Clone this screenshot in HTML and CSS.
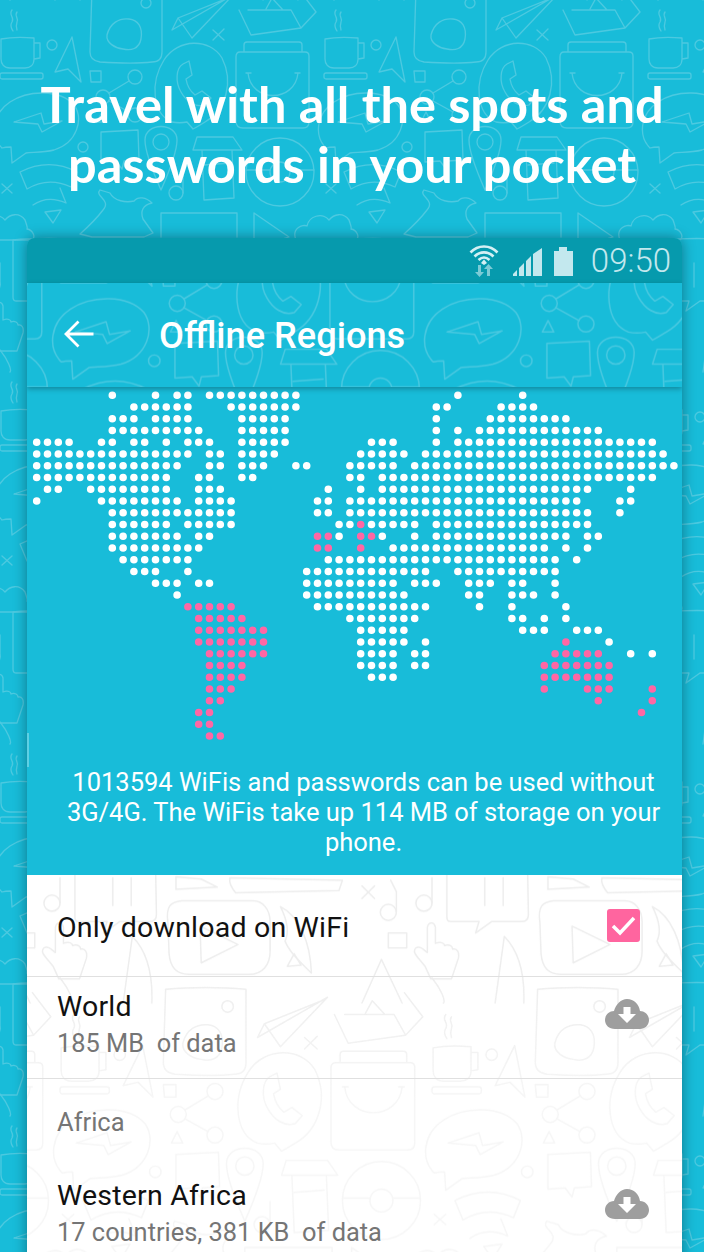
FILE: index.html
```html
<!DOCTYPE html>
<html lang="en">
<head>
<meta charset="utf-8">
<title>Offline Regions</title>
<link rel="stylesheet" href="styles.css">
</head>
<body>
<svg class="defs" width="0" height="0" aria-hidden="true">
  <defs>
    <g id="d">
      <path d="M12 10c-4 5 3 7 0 12c-2 3-1 6 1 9M17 12c-3 4 2 6 0 10c-1 3-1 5 0 8"/>
      <path d="M1 39c10-2 22-2 33-1v21c0 6-4 9-9 9H10c-6 0-9-4-9-9zM34 43h6v15l-6 1"/>
      <rect x="0" y="73" width="43" height="6" rx="2"/>
      <circle cx="52" cy="45" r="5"/>
      <path d="M72 37L55 72l13-3l13 13z"/>
      <path d="M90 71h11v11H91z"/>
      <circle cx="135" cy="77" r="7"/><circle cx="103" cy="97" r="7"/><circle cx="135" cy="115" r="7"/>
      <path d="M129 81l-20 12M109 101l20 11M102 112l5 10h-10z"/>
      <path d="M92 -12c20-2 50-2 70 0v64c0 7-3 10-10 10c-18 2-36 1-52 0c-7-1-10-4-10-10z"/>
      <path d="M107 35c3-12 12-17 22-16c9 1 14 8 12 20c-2 10-10 12-18 10c-8-1-17-6-16-14z"/>
      <circle cx="146" cy="3" r="5"/>
      <path d="M172 30L233-5L192 38L178 18zM178 18L228-2"/>
      <path d="M213 30l11 10M224 29l-11 11"/>
      <path d="M239 10L251 35L301 28L316 12L300-9M248 10h43l10 18M266 9l6-11l11 12"/>
      <path d="M244 52v-7c0-2 1-3 3-3h52c2 0 3 1 3 3v7M240 52h65c3 0 4 2 4 4v66c0 4-2 6-6 6h-60c-5 0-7-3-7-7V57c0-3 1-5 4-5z"/>
      <path d="M248 73c3 30 47 30 50 0M246 73h5M295 73h5"/>
      <path d="M172 122c-20-8-22-40-8-62c14-22 46-22 58-2c12 24 4 52-17 64c-5 3-8 5-12 7l-6-7c-5 1-10 1-15 0z"/>
      <path d="M183 64c-7 4-8 18-2 28c5 9 14 16 24 13l6-7l-9-7l-7 4c-5-4-8-10-9-16l6-4l-3-14z"/>
      <path d="M2 148c-12-12-10-34 8-46c18-12 50-13 64 3c10 14 3 38-20 45c-12 3-22 2-28 3L12 163l-1-16c-3 0-6 0-9 1z"/>
      <path d="M14 122L41 113L44 124L62 121L42 132L38 124z"/>
      <circle cx="83" cy="147" r="5"/>
      <path d="M101 132l37-2l1 30l-15 1l-2 8l-6-8l-15 1z"/>
      <path d="M161 190c-8-18-16-40-16-50c0-18 32-18 32 0c0 10-8 32-16 50z"/><circle cx="161" cy="142" r="8"/>
      <path d="M193 150l4-13h36l9 13zM202 150l2 50l30-2l-2-48M204 165l26-2"/>
      <circle cx="280" cy="172" r="34"/><circle cx="280" cy="172" r="10"/><path d="M246 170h24M290 170h24"/>
      <path d="M20 172c20-10 38-10 57 0l-6 15c-15-7-29-7-44 2zM33 205c10-7 22-7 33-2l-6-15M45 212l16-2l-8 13z"/>
      <path d="M2 184l10 9M12 184l-10 9"/>
      <circle cx="176" cy="193" r="7"/><path d="M183 193v-20"/>
      <path d="M-28 240c-5-12 7-16 11-14c2-10 15-14 22-6c5-6 14-8 20 0c2 6 3 8 2 9c6 1 9 8 5 11z"/>
      <path d="M100 190c-6 6 12 10 3 20c-6 8-14 16-23 24l12 3h52l9-4l-10-14c-3-8 0-14 9-16c-6-6-14-7-18-2c-8 2-20 0-24-8z"/>
      <path d="M161 237v-24h76v24"/>
      <path d="M254 213l35 24l-35 10z"/>
      <path d="M13 240c20-2 52-2 70 0l1 55c0 4-2 6-6 6H52l-14 10l3-10H16c-2 0-3-2-3-4z"/>
      <path d="M46 263v24M62 263v24"/>
      <path d="M148 263l98 2l-3 9l-90 2c-4-5-6-9-5-13z"/>
      <path d="M101 262l22 2l14 7l-36 2z"/>
      <path d="M94 302c-2-14 2-18 12-19h62c9 0 15 8 15 18v26c0 12-7 20-18 20H112c-10 0-16-6-17-18z"/>
      <path d="M122 305l33 16l-32 16z"/>
      <path d="M192 288c16 8 26 30 27 58c-10-10-19-18-23-28c4-8 2-18-4-30z"/><path d="M198 340l6-11l6 10z"/>
      <path d="M263 270l11 11M274 270l-11 11"/>
      <circle cx="286" cy="293" r="7"/><circle cx="317" cy="285" r="7"/><path d="M293 293v-18l-5-10M324 285v-22"/>
      <path d="M286 311h16v13h-16z"/>
      <path d="M318 340c-6-8-12-12-8-16c4-3 8 3 10 4v-22c1-5 6-5 7 0v14c5-2 8 0 8 2c4-2 7 1 7 3c4-1 6 3 5 8l-6 18h-18z"/>
      <path d="M263 372l17-38l18 38M55 372l8-58c12 12 18 30 17 58M0 350c8 10 12 20 10 22"/>
    </g>
    <pattern id="p-bg" width="324" height="372" patternUnits="userSpaceOnUse">
      <use href="#d"/><use href="#d" x="324"/><use href="#d" y="372"/><use href="#d" x="-324"/><use href="#d" y="-372"/>
    </pattern>
    <pattern id="p-bar" width="324" height="372" patternUnits="userSpaceOnUse" patternTransform="translate(32 -91) scale(1.148)">
      <use href="#d"/><use href="#d" x="324"/><use href="#d" y="372"/><use href="#d" x="-324"/><use href="#d" y="-372"/>
    </pattern>
    <pattern id="p-list" width="324" height="372" patternUnits="userSpaceOnUse" patternTransform="translate(33 -299) scale(1.148)">
      <use href="#d"/><use href="#d" x="324"/><use href="#d" y="372"/><use href="#d" x="-324"/><use href="#d" y="-372"/>
    </pattern>
  </defs>
</svg>

<main class="page">
  <svg class="doodles" aria-hidden="true"><rect width="100%" height="100%" fill="url(#p-bg)"/></svg>
  <h1 class="headline">Travel with all the spots and<br>passwords in your pocket</h1>

  <section class="phone">
    <div class="statusbar">
      <svg class="ic-wifi" viewBox="0 0 30 32" width="30" height="32" aria-hidden="true">
        <path class="st" d="M1.5 7.5C9-.5 21-.5 28.500 7.500M5.500 11.500C11 6 19 6 24.500 11.500M9.500 15C13 11.800 17 11.800 20.500 15"/>
        <path class="fi" d="M15 14.500l3 3.500-3 2-3-2z"/>
        <path class="dim" d="M10.500 32l-4.500-5h3v-7h3v7h3zM19.500 19l4.500 5h-3v7h-3v-7h-3z"/>
      </svg>
      <svg class="ic-signal" viewBox="0 0 29 28" width="29" height="28" aria-hidden="true">
        <path class="fi" d="M0 28v-2l4-4v6zM6 28v-8l5-5v13zM13 28V13l5-5v20zM20 28V6l9-6v28z"/>
      </svg>
      <svg class="ic-battery" viewBox="0 0 19 29" width="19" height="29" aria-hidden="true">
        <path class="fi" d="M5 0h8v4h6v25H0V4h5z"/>
      </svg>
      <span class="clock">09:50</span>
    </div>

    <header class="toolbar">
      <svg class="doodles" aria-hidden="true"><rect width="100%" height="100%" fill="url(#p-bar)"/></svg>
      <svg class="ic-back" viewBox="0 0 30 28" width="30" height="28" aria-hidden="true">
        <path d="M29.500 14H2.500M14.500 1.500L2 14l12.500 12.500"/>
      </svg>
      <h2 class="toolbar-title">Offline Regions</h2>
    </header>

    <section class="map-panel">
      <svg class="map" width="655" height="365" role="img" aria-label="World map of dots">
        <g transform="translate(9.7 8.300) scale(10.8 11.75)">
          <path class="dots dots-white" d="M7 0h.01M11 0h.01M13 0h1.010M16 0h8.010M39 0h.01M45 0h.01
M9 1h5.010M18 1h6.010M37 1h1.010M43 1h3.010
M7 2h2.010M11 2h3.010M19 2h4.010M37 2h.01M42 2h7.010
M7 3h8.010M19 3h4.010M37 3h.01M39 3h.01M41 3h11.010
M0 4h3.010M6 4h1.010M9 4h1.010M12 4h.01M14 4h2.010M19 4h4.010M31 4h2.010M37 4h.01M39 4h18.010
M0 5h14.010M16 5h1.010M19 5h3.010M30 5h4.010M36 5h22.010
M0 6h13.010M16 6h1.010M19 6h2.010M24 6h1.010M29 6h4.010M35 6h24.010
M0 7h12.010M15 7h1.010M19 7h1.010M29 7h1.010M32 7h25.010
M1 8h1.010M5 8h7.010M15 8h2.010M27 8h.01M30 8h.01M32 8h19.010M55 8h.01
M0 9h.01M6 9h7.010M15 9h3.010M26 9h1.010M29 9h21.010M54 9h1.010
M7 10h11.010M26 10h1.010M29 10h22.010M54 10h.01
M7 11h5.010M14 11h4.010M28 11h1.010M31 11h4.010M37 11h14.010
M7 12h6.010M15 12h1.010M28 12h.01M32 12h.01M35 12h.01M37 12h12.010M51 12h1.010
M7 13h8.010M33 13h14.010M49 13h.01M51 13h.01
M8 14h6.010M27 14h21.010M50 14h.01
M9 15h2.010M14 15h.01M25 15h11.010M39 15h9.010
M11 16h2.010M15 16h1.010M25 16h8.010M35 16h2.010M40 16h2.010M44 16h1.010M48 16h.01
M13 17h.01M25 17h9.010M40 17h1.010M44 17h2.010M48 17h.01
M26 18h10.010M41 18h.01M44 18h.01M49 18h.01
M29 19h6.010M44 19h1.010M47 19h.01M49 19h.01
M30 20h4.010M45 20h2.010M50 20h2.010
M30 21h4.010M36 21h.01M53 21h.01
M30 22h3.010M35 22h1.010M55 22h.01M57 22h.01
M30 23h3.010M35 23h1.010
M31 24h2.010"/>
          <path class="dots dots-pink" d="M30 11h.01
M26 12h1.010M30 12h1.010
M26 13h1.010M30 13h.01
M14 18h4.010
M15 19h4.010
M15 20h6.010
M15 21h6.010M49 21h.01
M16 22h5.010M48 22h4.010
M16 23h3.010M47 23h6.010
M16 24h3.010M47 24h6.010
M16 25h2.010M47 25h.01M51 25h2.010M57 25h.01
M16 26h1.010M52 26h.01M57 26h.01
M15 27h1.010M56 27h.01
M15 28h1.010
M16 29h1.010"/>
        </g>
      </svg>
      <p class="map-note">1013594 WiFis and passwords can be used without 3G/4G. The WiFis take up 114 MB of storage on your phone.</p>
    </section>

    <section class="list">
      <svg class="doodles doodles-list" aria-hidden="true"><rect width="100%" height="100%" fill="url(#p-list)"/></svg>
      <div class="row row-check">
        <span class="row-title">Only download on WiFi</span>
        <svg class="checkbox" viewBox="0 0 33 33" width="33" height="33" aria-hidden="true">
          <rect width="33" height="33" rx="3"/>
          <path d="M6 17l7 7L27 9"/>
        </svg>
      </div>
      <div class="row row-data">
        <div class="row-text">
          <span class="row-title">World</span>
          <span class="row-sub">185 MB&nbsp; of data</span>
        </div>
        <svg class="cloud" viewBox="0 0 44 30" width="44" height="30" aria-hidden="true">
          <path class="cloud-body" d="M10 30C4 30 0 26 0 21c0-5 4-9 9-9C11 5 16 0 22 0c7 0 12 5 13 12c5 0 9 4 9 9c0 5-4 9-9 9z"/>
          <path class="cloud-arrow" d="M18.500 8h7v7h5.500L22 24l-9-9h5.500z"/>
        </svg>
      </div>
      <div class="section-label">Africa</div>
      <div class="row row-plain">
        <div class="row-text">
          <span class="row-title">Western Africa</span>
          <span class="row-sub">17 countries, 381 KB&nbsp; of data</span>
        </div>
        <svg class="cloud" viewBox="0 0 44 30" width="44" height="30" aria-hidden="true">
          <path class="cloud-body" d="M10 30C4 30 0 26 0 21c0-5 4-9 9-9C11 5 16 0 22 0c7 0 12 5 13 12c5 0 9 4 9 9c0 5-4 9-9 9z"/>
          <path class="cloud-arrow" d="M18.500 8h7v7h5.500L22 24l-9-9h5.500z"/>
        </svg>
      </div>
    </section>
  </section>
</main>
</body>
</html>
```
FILE: styles.css
```css
* { box-sizing: border-box; }
html, body { margin: 0; height: 100%; }
body { overflow: hidden; background: #18bcd9; font-family: Roboto, "Liberation Sans", sans-serif; }
.defs { position: absolute; }

#d { fill: none; stroke-width: 1.300; stroke-linecap: round; stroke-linejoin: round; }
#p-bg use { stroke: #4cc9e0; }
#p-bar use { stroke: #48c8e0; }
#p-list use { stroke: #ededed; }

.page { position: relative; height: 1252px; overflow: hidden; background: #18bcd9; padding-top: 74px; }
.doodles { position: absolute; inset: 0; width: 100%; height: 100%; display: block; }
.doodles-list { -webkit-mask-image: linear-gradient(#000 20%, rgba(0, 0, 0, .5) 45%); mask-image: linear-gradient(#000 20%, rgba(0, 0, 0, .5) 45%); }

.headline {
  position: relative; margin: 0 0 44px; text-align: center; color: #fff;
  font-family: Lato, "Liberation Sans", sans-serif; font-weight: 700; font-size: 50.500px; line-height: 60px;
}

.phone {
  position: relative; margin: 0 22px 0 27px; border-radius: 8px 8px 0 0; background: #18bcd9;
  box-shadow: 0 0 14px rgba(0, 0, 0, .38); height: 1100px; overflow: hidden;
}

.statusbar {
  display: flex; align-items: center; justify-content: flex-end; height: 45px;
  background: #069aad; padding: 0 11px 0 0;
}
.ic-wifi { margin: 0 14px 0 0; }
.ic-wifi .st { fill: none; stroke: #d4f0f4; stroke-width: 2.600; }
.ic-wifi .fi { fill: #d4f0f4; }
.ic-wifi .dim { fill: #7ccbd6; }
.ic-signal { margin-right: 12px; margin-top: 3px; }
.ic-signal .fi, .ic-battery .fi { fill: #c3e8ee; }
.ic-battery { margin-right: 18px; margin-top: 2px; }
.clock { font-weight: 300; font-size: 33px; color: #c3e8ee; line-height: 45px; }

.toolbar {
  position: relative; height: 104px; display: flex; align-items: center; padding: 0 0 0 37px;
  background: #18bcd9; box-shadow: 0 2px 5px rgba(0, 0, 0, .28); z-index: 1;
}
.ic-back { position: relative; fill: none; stroke: #fff; stroke-width: 2.800; margin-bottom: 3px; }
.ic-back path { fill: none; }
.toolbar-title {
  position: relative; margin: 2px 0 0 65px; color: #fff; font-weight: 500; font-size: 36.200px; line-height: 40px;
}

.map-panel { position: relative; height: 488px; background: #18bcd9; }
.map-panel::before { content: ""; position: absolute; left: 0; top: 346px; width: 2px; height: 34px; background: rgba(255, 255, 255, .3); }
.map { display: block; }
.dots { fill: none; stroke-width: 7.600; stroke-linecap: round; stroke-dasharray: 0 10.8; vector-effect: non-scaling-stroke; }
.dots-white { stroke: #fff; }
.dots-pink { stroke: #ff67a4; }
.map-note {
  margin: 15px 0 0; padding: 0 20px 0 38px; text-align: center; color: #fff; font-size: 25.500px; line-height: 30px;
}

.list { position: relative; background: #fff; height: 500px; }
.row {
  position: relative; display: flex; align-items: center; justify-content: space-between;
  height: 102px; padding: 0 33px 0 30px; border-bottom: 1.500px solid #e0e0e0;
}
.row-check { padding-right: 42px; }
.row-check .row-title { margin-top: 4px; }
.row-data { padding-bottom: 6px; }
.row-plain { border-bottom: 0; height: 100px; }
.row-text { display: flex; flex-direction: column; }
.row-title { color: #111; font-size: 28.500px; line-height: 37px; letter-spacing: .2px; }
.row-sub { color: #757575; font-size: 25.400px; line-height: 37px; }
.section-label { position: relative; color: #757575; font-size: 25.500px; line-height: 30px; padding: 28px 0 0 30px; height: 85px; }
.checkbox rect { fill: #ff659f; }
.checkbox path { fill: none; stroke: #fff; stroke-width: 3.500; }
.cloud { margin-bottom: 21px; }
.cloud-body { fill: #9e9e9e; }
.cloud-arrow { fill: #fff; }
```
